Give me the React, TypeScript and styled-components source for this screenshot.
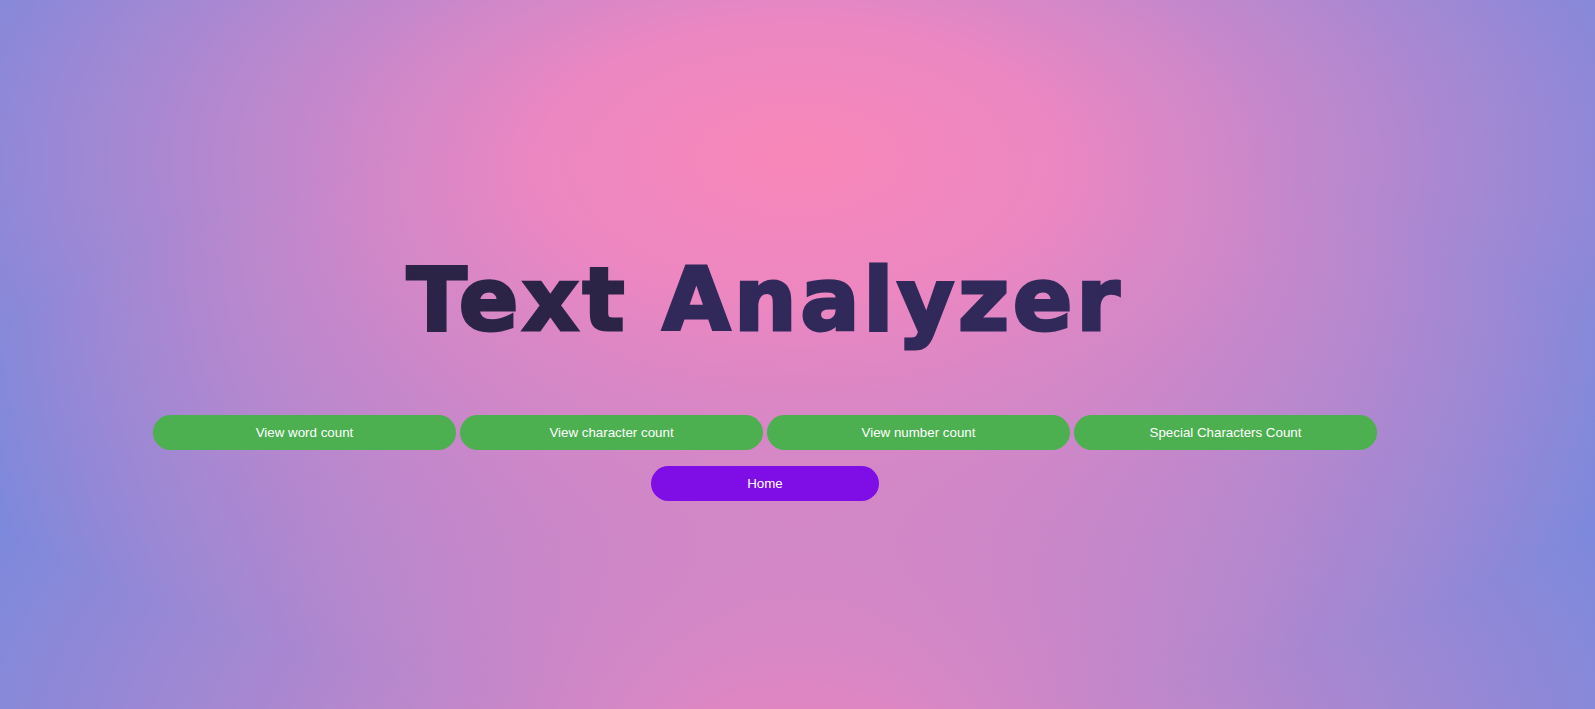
import React from 'react';
import styled, { createGlobalStyle } from 'styled-components';

const GlobalStyle = createGlobalStyle`
    html, body {
        margin: 0;
        padding: 0;
    }
    body {
        min-height: 100vh;
        background:
            radial-gradient(ellipse 1080px 700px at 50% 800px, rgba(242, 134, 190, 1) 0%, rgba(242, 134, 190, 0) 100%),
            radial-gradient(ellipse 1060px 560px at 50% 160px, #f887b8 0%, #ec87c2 24%, #6489e2 100%);
        background-color: #6489e2;
        font-family: "Liberation Sans", Arial, sans-serif;
    }
`;

const buttons = ['View word count', 'View character count', 'View number count', 'Special Characters Count'];

const App = () => {
    return (
        <>
            <GlobalStyle />
            <StyledPage>
                <StyledTitle>
                    <StyledTitleWord $tone="#2b2446">Text </StyledTitleWord>
                    <StyledTitleWord $tone="#31295a">Analyzer</StyledTitleWord>
                </StyledTitle>
                <StyledButtonRow>
                    {buttons.map((label) => (
                        <StyledPillButton key={label} type="button">
                            {label}
                        </StyledPillButton>
                    ))}
                </StyledButtonRow>
                <StyledHomeButton type="button">Home</StyledHomeButton>
            </StyledPage>
        </>
    );
};

const StyledPage = styled.div`
    width: 1530px;
    padding-top: 254px;
    display: flex;
    flex-direction: column;
    align-items: center;
`;

const StyledTitle = styled.h1`
    margin: 0;
    font-family: "DejaVu Sans", sans-serif;
    font-weight: 700;
    font-size: 88px;
    line-height: 92px;
    letter-spacing: 3.6px;
    white-space: pre;
`;

const StyledTitleWord = styled.span<{ $tone: string }>`
    color: ${({ $tone }) => $tone};
    -webkit-text-stroke: 3px ${({ $tone }) => $tone};
`;

const StyledButtonRow = styled.div`
    margin-top: 69px;
    display: flex;
    gap: 4px;
`;

const StyledPillButton = styled.button`
    width: 303px;
    height: 35px;
    border: none;
    border-radius: 18px;
    background-color: #4caf50;
    color: #ffffff;
    font-family: "Liberation Sans", Arial, sans-serif;
    font-size: 13.333px;
    cursor: pointer;
`;

const StyledHomeButton = styled(StyledPillButton)`
    width: 228px;
    margin-top: 16px;
    background-color: #7f0ee6;
`;

export default App;
